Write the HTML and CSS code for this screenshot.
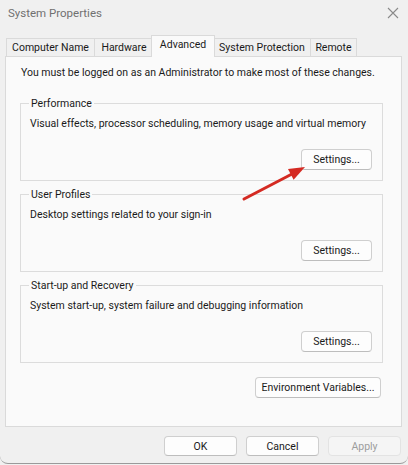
FILE: index.html
```html
<!DOCTYPE html>
<html lang="en">
<head>
  <meta charset="UTF-8" />
  <title>System Properties</title>
  <link rel="stylesheet" href="styles.css">
</head>
<body>
  <div class="window">
    <div class="titlebar">
      <span class="title">System Properties</span>
      <svg class="close" width="12" height="12" viewBox="0 0 12 12">
        <path d="M1 1 L11 11 M11 1 L1 11" stroke="#8a8a8a" stroke-width="1.1" fill="none" />
      </svg>
    </div>

    <div class="tabs">
      <div class="tab t-name">Computer Name</div>
      <div class="tab t-hw">Hardware</div>
      <div class="tab active">Advanced</div>
      <div class="tab t-prot">System Protection</div>
      <div class="tab t-rem">Remote</div>
    </div>

    <div class="panel">
      <p class="note">You must be logged on as an Administrator to make most of these changes.</p>

      <fieldset class="group">
        <legend>Performance</legend>
        <p>Visual effects, processor scheduling, memory usage and virtual memory</p>
        <div class="row"><button>Settings...</button></div>
      </fieldset>

      <fieldset class="group">
        <legend>User Profiles</legend>
        <p>Desktop settings related to your sign-in</p>
        <div class="row"><button>Settings...</button></div>
      </fieldset>

      <fieldset class="group">
        <legend>Start-up and Recovery</legend>
        <p>System start-up, system failure and debugging information</p>
        <div class="row"><button>Settings...</button></div>
      </fieldset>

      <div class="env-row"><button class="env">Environment Variables...</button></div>
    </div>

    <div class="footer">
      <button class="dlg">OK</button>
      <button class="dlg">Cancel</button>
      <button class="dlg disabled">Apply</button>
    </div>

    <!-- annotation arrow drawn over the dialog -->
    <svg class="arrow" width="80" height="50" viewBox="0 0 80 50">
      <line x1="3" y1="41" x2="51" y2="16" stroke="#d42a22" stroke-width="3" stroke-linecap="round" />
      <polygon points="64,9 52.6,21.7 47,11.1" fill="#d42a22" />
    </svg>
  </div>
</body>
</html>
```

FILE: styles.css
```css
body {
  margin: 0;
  font-family: Roboto, "Liberation Sans", Arial, sans-serif;
  font-size: 10.5px;
  color: #1a1a1a;
  background: #f0f0f0;
}
.window {
  position: relative;
  width: 408px;
  height: 464px;
  background: #f0f0f0;
  border-bottom: 1px solid #9a9a9a;
  border-radius: 0 0 8px 8px;
  box-sizing: border-box;
  white-space: nowrap;
}
.titlebar {
  height: 27px;
  display: flex;
  align-items: center;
  justify-content: space-between;
  padding: 0 9px 2px 8px;
  box-sizing: border-box;
}
.title {
  color: #707070;
  font-size: 11.5px;
}
.tabs {
  display: flex;
  align-items: flex-end;
  margin-left: 6px;
  margin-top: 8px;
  height: 21px;
  position: relative;
  z-index: 1;
}
.tab {
  height: 18px;
  line-height: 17px;
  text-align: center;
  border: 1px solid #dadada;
  border-bottom: none;
  margin-right: -1px;
  background: #f0f0f0;
  box-sizing: border-box;
}
.t-name { width: 89px; }
.t-hw { width: 60px; }
.t-prot { width: 98px; }
.t-rem { width: 47px; }
.tab.active {
  width: 64px;
  height: 22px;
  line-height: 18px;
  background: #fafafa;
  margin: 0 -2px -1px -2px;
  position: relative;
  z-index: 2;
}
.panel {
  margin: 0 6px 0 5px;
  height: 371px;
  background: #fafafa;
  border: 1px solid #dadada;
  padding: 8px 18px 0 14px;
  box-sizing: border-box;
}
.note {
  margin: 0 0 0 1px;
  line-height: 15px;
}
.group {
  margin: 16px 0 0 0;
  padding: 5px 10px 0 9px;
  border: 1px solid #dcdcdc;
  height: 85px;
  box-sizing: border-box;
  line-height: 15px;
}
.group + .group {
  margin-top: 6px;
}
.group legend {
  padding: 0 2px;
  margin-left: -1px;
}
.group p {
  margin: 0;
}
.row {
  display: flex;
  justify-content: flex-end;
  margin-top: 18px;
}
button {
  font-family: inherit;
  font-size: 10.5px;
  color: #1a1a1a;
  background: #fdfdfd;
  border: 1px solid #cfcfcf;
  border-bottom-color: #bdbdbd;
  border-radius: 4px;
  height: 21px;
  width: 71px;
  padding: 0;
}
.env-row {
  display: flex;
  justify-content: flex-end;
  margin-top: 14px;
  margin-right: 2px;
}
button.env {
  width: 126px;
}
.footer {
  display: flex;
  justify-content: flex-end;
  gap: 9px;
  margin-top: 9px;
  margin-right: 7px;
}
button.dlg {
  width: 73px;
  height: 20px;
}
button.disabled {
  color: #9d9d9d;
  background: #f5f5f5;
  border-color: #e3e3e3;
}
.arrow {
  position: absolute;
  left: 241px;
  top: 158px;
}
```
